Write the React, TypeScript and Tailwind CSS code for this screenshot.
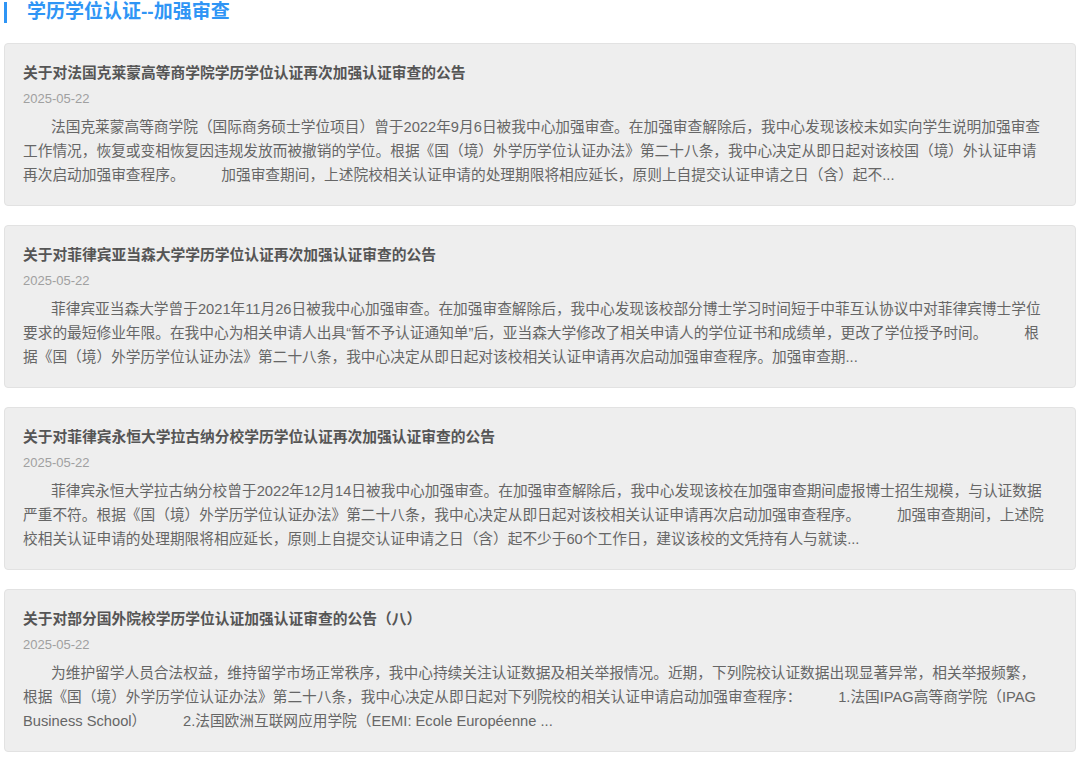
const notices = [
  {
    title: "关于对法国克莱蒙高等商学院学历学位认证再次加强认证审查的公告",
    date: "2025-05-22",
    summary:
      "法国克莱蒙高等商学院（国际商务硕士学位项目）曾于2022年9月6日被我中心加强审查。在加强审查解除后，我中心发现该校未如实向学生说明加强审查工作情况，恢复或变相恢复因违规发放而被撤销的学位。根据《国（境）外学历学位认证办法》第二十八条，我中心决定从即日起对该校国（境）外认证申请再次启动加强审查程序。\u3000\u3000\u3000加强审查期间，上述院校相关认证申请的处理期限将相应延长，原则上自提交认证申请之日（含）起不...",
  },
  {
    title: "关于对菲律宾亚当森大学学历学位认证再次加强认证审查的公告",
    date: "2025-05-22",
    summary:
      "菲律宾亚当森大学曾于2021年11月26日被我中心加强审查。在加强审查解除后，我中心发现该校部分博士学习时间短于中菲互认协议中对菲律宾博士学位要求的最短修业年限。在我中心为相关申请人出具“暂不予认证通知单”后，亚当森大学修改了相关申请人的学位证书和成绩单，更改了学位授予时间。\u3000\u3000\u3000根据《国（境）外学历学位认证办法》第二十八条，我中心决定从即日起对该校相关认证申请再次启动加强审查程序。加强审查期...",
  },
  {
    title: "关于对菲律宾永恒大学拉古纳分校学历学位认证再次加强认证审查的公告",
    date: "2025-05-22",
    summary:
      "菲律宾永恒大学拉古纳分校曾于2022年12月14日被我中心加强审查。在加强审查解除后，我中心发现该校在加强审查期间虚报博士招生规模，与认证数据严重不符。根据《国（境）外学历学位认证办法》第二十八条，我中心决定从即日起对该校相关认证申请再次启动加强审查程序。\u3000\u3000\u3000加强审查期间，上述院校相关认证申请的处理期限将相应延长，原则上自提交认证申请之日（含）起不少于60个工作日，建议该校的文凭持有人与就读...",
  },
  {
    title: "关于对部分国外院校学历学位认证加强认证审查的公告（八）",
    date: "2025-05-22",
    summary:
      "为维护留学人员合法权益，维持留学市场正常秩序，我中心持续关注认证数据及相关举报情况。近期，下列院校认证数据出现显著异常，相关举报频繁，根据《国（境）外学历学位认证办法》第二十八条，我中心决定从即日起对下列院校的相关认证申请启动加强审查程序：\u3000\u3000\u30001.法国IPAG高等商学院（IPAG Business School）\u3000\u3000\u30002.法国欧洲互联网应用学院（EEMI: Ecole Européenne ...",
  },
];

export default function App() {
  return (
    <div
      className="min-h-[757px] bg-white px-1 pt-px"
      style={{ fontFamily: '"Liberation Sans", "Noto Sans CJK SC", sans-serif' }}
    >
      <div className="flex h-[22px] items-center">
        <span className="h-[21px] w-[3px] bg-[#2f95f5]" />
        <h1 className="ml-5 text-[19px] leading-[22px] font-bold text-[#2f95f5]">学历学位认证--加强审查</h1>
      </div>

      <div className="mt-5 flex flex-col gap-[19px]">
        {notices.map((item) => (
          <article
            key={item.title}
            className="h-[163px] rounded-[4px] border border-[#e2e2e2] bg-[#eeeeee] pl-[18px] pr-[27px] pt-[18px]"
          >
            <h2 className="text-[14.75px] leading-[22px] font-bold text-[#555555]">{item.title}</h2>
            <p className="mt-[5px] text-[13px] leading-[20px] text-[#a0a0a0]">{item.date}</p>
            <p className="mt-[6px] indent-[28px] text-[14.7px] leading-[24px] text-[#666666]">{item.summary}</p>
          </article>
        ))}
      </div>
    </div>
  );
}
